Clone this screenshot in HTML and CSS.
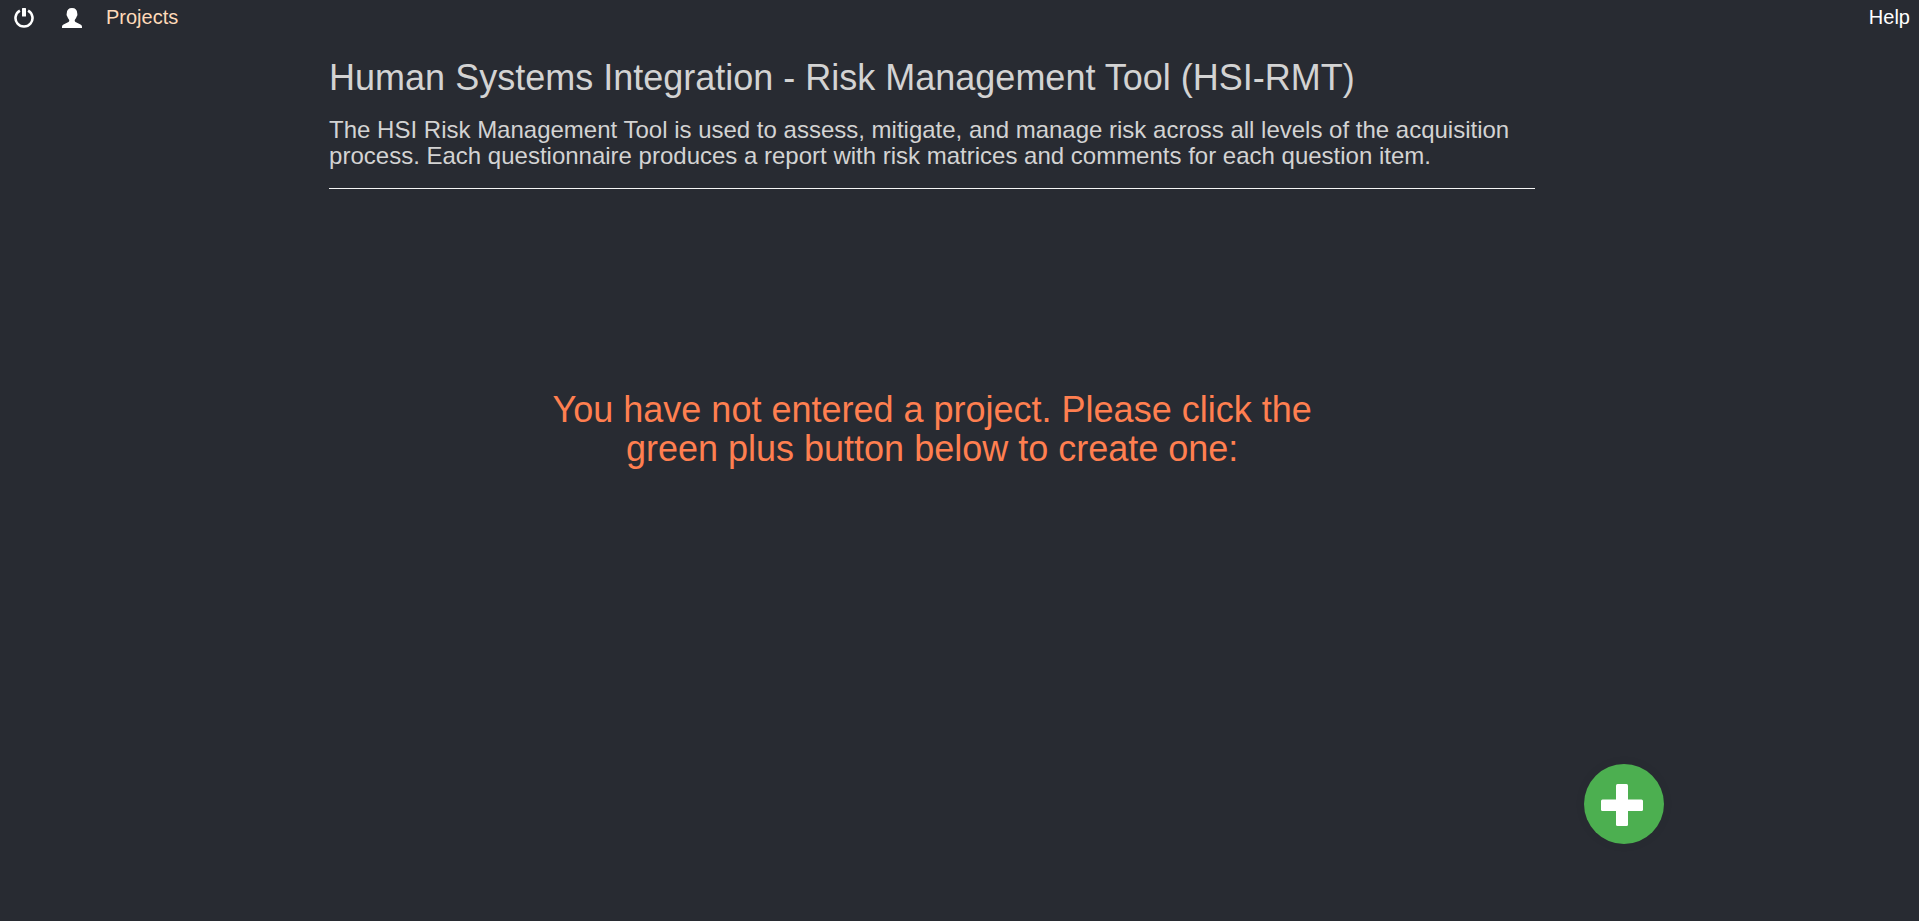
FILE: index.html
```html
<!DOCTYPE html>
<html lang="en">
<head>
<meta charset="utf-8">
<title>HSI-RMT Projects</title>
<meta name="viewport" content="width=device-width, initial-scale=1">
<link rel="stylesheet" href="styles.css">
</head>
<body>
<nav class="navbar">
  <a class="nav-link" href="#" aria-label="Log out">
    <svg class="nav-icon" viewBox="0 0 20 20" aria-hidden="true"><path d="M5.9 2.6A8.5 8.5 0 1 0 14.1 2.6" fill="none" stroke="currentColor" stroke-width="2.6"/><rect x="8" y="0" width="4" height="8.5" rx=".5" fill="currentColor"/></svg>
  </a>
  <a class="nav-link" href="#" aria-label="Account">
    <svg class="nav-icon" viewBox="0 0 20 20" aria-hidden="true"><path d="M10 0C13.5 0 15.2 2 15.2 5C15.2 5.6 15.6 6 15.3 7.2C15.1 8.2 14.6 8.5 14.4 9.2C14 10.8 12.7 11.4 12.7 12.6C12.7 13.4 13.2 13.9 14 14.3L18.5 16.6C19.6 17.2 20 17.9 20 19V20H0V19C0 17.9.4 17.2 1.5 16.6L6 14.3C6.8 13.9 7.3 13.4 7.3 12.6C7.3 11.4 6 10.8 5.6 9.2C5.4 8.5 4.9 8.2 4.7 7.2C4.4 6 4.8 5.6 4.8 5C4.8 2 6.5 0 10 0Z" fill="currentColor"/></svg>
  </a>
  <a class="nav-link nav-link-active" href="#">Projects</a>
  <a class="nav-link nav-link-help" href="#">Help</a>
</nav>
<main class="content">
  <header class="intro">
    <h1 class="title">Human Systems Integration - Risk Management Tool (HSI-RMT)</h1>
    <p class="summary">The HSI Risk Management Tool is used to assess, mitigate, and manage risk across all levels of the acquisition process. Each questionnaire produces a report with risk matrices and comments for each question item.</p>
  </header>
  <p class="empty-message">You have not entered a project. Please click the green plus button below to create one:</p>
</main>
<button class="add-button" type="button" aria-label="Create project">
  <svg class="add-icon" viewBox="0 0 42 42" aria-hidden="true"><rect x="15" width="12" height="42" rx="1.5"/><rect y="15.5" width="42" height="11.5" rx="1.5"/></svg>
</button>
</body>
</html>
```
FILE: styles.css
```css
* {
  box-sizing: border-box;
}

body {
  margin: 0;
  min-height: 100vh;
  background: #282b32;
  color: #d3d3d3;
  font-family: "Liberation Sans", Arial, sans-serif;
}

.navbar {
  display: flex;
  align-items: flex-start;
  gap: 24px;
  height: 35px;
  padding: 0 9px 0 14px;
  font-size: 20px;
  line-height: 35px;
}

.nav-link {
  display: flex;
  color: #fff;
  text-decoration: none;
}

.nav-link + .nav-link {
  margin-left: 4px;
}

.nav-link + .nav-link-active {
  margin-left: 0;
  color: #ffdab9;
}

.nav-link + .nav-link-help {
  margin-left: auto;
}

.nav-icon {
  width: 20px;
  height: 20px;
  margin-top: 8px;
}

.content {
  margin: 0 20% 0 17.15%;
}

.intro {
  padding: 23px 0 19px;
  border-bottom: 1px solid #f5f5f5;
}

.title {
  margin: 0 0 19px;
  font-size: 36px;
  font-weight: 400;
  line-height: 40px;
}

.summary {
  margin: 0;
  font-size: 24px;
  line-height: 26px;
}

.empty-message {
  width: 66%;
  margin: 201px auto 0;
  color: #ff7f50;
  font-size: 36px;
  line-height: 39px;
  text-align: center;
}

.add-button {
  position: fixed;
  right: 255px;
  bottom: 77px;
  display: flex;
  align-items: center;
  justify-content: center;
  width: 80px;
  height: 80px;
  padding: 2px 4px 0 0;
  border: 0;
  border-radius: 50%;
  background: #4caf50;
  box-shadow: 0 0 12px rgba(0, 0, 0, 0.05);
  cursor: pointer;
}

.add-icon {
  width: 42px;
  height: 42px;
  fill: #fff;
}
```
